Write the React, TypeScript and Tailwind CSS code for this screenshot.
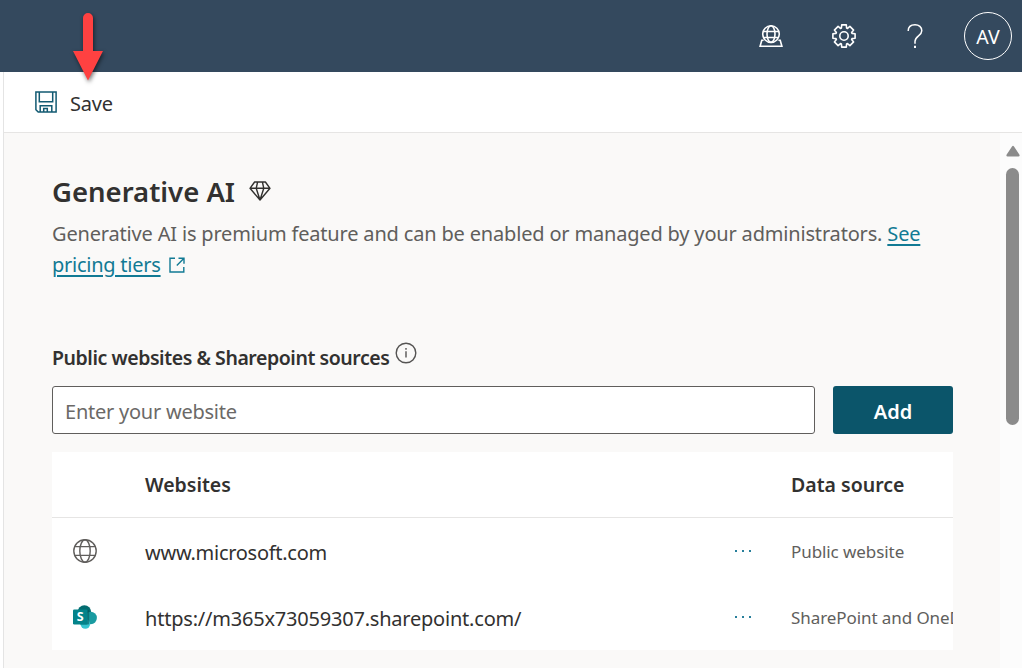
import type { ReactNode } from "react";

function Globe({ className }: { className?: string }) {
  return (
    <svg viewBox="0 0 24 24" className={className} fill="none" stroke="currentColor" strokeWidth="1.4">
      <circle cx="12" cy="12" r="11.2" />
      <ellipse cx="12" cy="12" rx="5.2" ry="11.2" />
      <path d="M1.8 7.6h20.4M1.8 16.4h20.4" />
    </svg>
  );
}

function PortalIcon() {
  return (
    <svg viewBox="0 0 24 24" className="h-6 w-6" fill="none" stroke="currentColor" strokeWidth="1.6">
      <circle cx="12" cy="10.1" r="8.3" />
      <ellipse cx="12" cy="10.1" rx="4" ry="8.3" />
      <path d="M4.2 7.5h15.6M4.2 13.5h15.6" />
      <path d="M4.6 16.2H2.8L1.1 22.2h21.8l-1.7-6h-1.8" />
    </svg>
  );
}

function GearIcon() {
  return (
    <svg viewBox="0 0 24 24" className="h-6 w-6" fill="none" stroke="currentColor" strokeWidth="1.6" strokeLinejoin="round">
      <path d="M9.7.9h4.6l.3 3.1.9.4 2.4-2 3.7 3.7-2 2.4.4.9 3.1.3v4.6l-3.1.3-.4.9 2 2.4-3.7 3.7-2.4-2-.9.4-.3 3.1H9.7l-.3-3.1-.9-.4-2.4 2-3.7-3.7 2-2.4-.4-.9-3.1-.3V9.7L4 9.4l.4-.9-2-2.4 3.7-3.7 2.4 2 .9-.4z" />
      <circle cx="12" cy="12" r="4.2" />
    </svg>
  );
}

function HelpIcon() {
  return (
    <svg viewBox="0 0 16 26" className="h-[26px] w-4" fill="none" stroke="currentColor" strokeWidth="1.5">
      <path d="M1.2 8C1.2 4 4 1.7 8 1.7s6.8 2.4 6.8 6c0 5-6.8 5.3-6.8 10.8v2.2" />
      <path d="M8 22.7v2.2" strokeWidth="2" />
    </svg>
  );
}

function SaveIcon() {
  return (
    <svg viewBox="0 0 22 22" className="h-[22px] w-[22px]" fill="none" stroke="#125a72" strokeWidth="1.5">
      <path d="M.9 .9h20.2v20.2H3.2L.9 18.8z" />
      <path d="M4.3 1v9.8h13.4V1M5.2 21v-6.2h11.6V21M8.7 21v-3.5h3.6V21" />
    </svg>
  );
}

function DiamondIcon() {
  return (
    <svg viewBox="0 0 22 20" className="h-5 w-[22px]" fill="none" stroke="#32312f" strokeWidth="1.4" strokeLinejoin="round">
      <path d="M5.6 1h10.8L21 7.3 11 19 1 7.3zM1 7.3h20M11 19 7.2 7.3 8.6 1M11 19l3.8-11.7L13.4 1" />
    </svg>
  );
}

function SharePointIcon() {
  return (
    <svg viewBox="0 0 24 24" className="h-6 w-6">
      <circle cx="11.4" cy="7" r="6.8" fill="#036c70" />
      <circle cx="17.7" cy="13" r="6.2" fill="#1a9ba1" />
      <circle cx="12.3" cy="19" r="4.8" fill="#37c6d0" />
      <path d="M7 5h8.2a1 1 0 0 1 1 1v12.5a1 1 0 0 1-1 1H7z" fill="#034f53" opacity=".55" />
      <rect x="0" y="4.4" width="14.5" height="15" rx="1.2" fill="#03838a" />
      <text x="7.3" y="16.3" fontFamily="Noto Sans, sans-serif" fontSize="12.5" fontWeight="700" fill="#fff" textAnchor="middle">S</text>
    </svg>
  );
}

function Dots() {
  return (
    <svg viewBox="0 0 18 4" className="h-1 w-[18px]" fill="#287f9b">
      <rect x="1" y="1" width="2" height="2" />
      <rect x="8" y="1" width="2" height="2" />
      <rect x="15" y="1" width="2" height="2" />
    </svg>
  );
}

function Row({ icon, site, source }: { icon: ReactNode; site: ReactNode; source: ReactNode }) {
  return (
    <div className="flex h-[66px] items-center">
      <div className="flex w-[93px] shrink-0 pl-[21px]">{icon}</div>
      <div className="w-[589px] shrink-0 pt-[3px] text-[20px]">{site}</div>
      <div className="w-[57px] shrink-0"><Dots /></div>
      <div className="shrink-0 pt-px text-[17px] tracking-[-0.08px] text-[#605e5c]">{source}</div>
    </div>
  );
}

export default function App() {
  return (
    <div className="flex h-[668px] w-[1022px] flex-col overflow-hidden bg-white font-['Noto_Sans','Open_Sans',sans-serif] whitespace-nowrap text-[#323130]">
      <header className="relative flex h-[72px] shrink-0 items-center justify-end bg-[#34495e] pr-[10px] text-white">
        <div className="mr-[49px]"><PortalIcon /></div>
        <div className="mr-[51px]"><GearIcon /></div>
        <div className="mr-[41px]"><HelpIcon /></div>
        <div className="flex h-12 w-12 items-center justify-center rounded-full border border-white pt-[2px] text-[19.5px]">
          <span>AV</span>
        </div>
        <svg viewBox="0 0 40 80" className="absolute top-[8px] left-[68px] z-10 h-20 w-10 drop-shadow-[1px_2px_2px_rgba(0,0,0,0.55)]">
          <path d="M15 10a5 5 0 0 1 10 0v33h10L20 72.5 5 43h10z" fill="#ff4141" />
        </svg>
      </header>
      <div className="ml-[3px] flex min-h-0 flex-1 flex-col border-l border-[#e4e4e4]">
        <div className="flex h-[61px] shrink-0 items-center border-b border-[#e6e5e4] bg-white pl-[31px]">
          <SaveIcon />
          <span className="ml-[13px] pt-[3px] text-[20px] tracking-[-0.2px]">Save</span>
        </div>
        <div className="flex min-h-0 flex-1 bg-[#faf9f8]">
          <main className="w-[996px] shrink-0 pl-12">
            <div className="mt-[38px] flex h-10 items-center">
              <h1 className="pt-px text-[27.5px] leading-10 font-semibold">Generative AI</h1>
              <div className="ml-[14px]"><DiamondIcon /></div>
            </div>
            <p className="mt-[7px] text-[20px] leading-[31px] tracking-[-0.175px] text-[#605e5c]">
              <span>Generative AI is premium feature and can be enabled or managed by your administrators.</span>{" "}
              <a className="text-[#117a94] underline decoration-2 underline-offset-[3px]">See</a>
              <br />
              <a className="tracking-[-0.25px] text-[#117a94] underline decoration-2 underline-offset-[3px]">pricing tiers</a>
              <svg viewBox="0 0 16 16" className="ml-2 inline-block h-4 w-4 align-[-1px]" fill="none" stroke="#117a94" strokeWidth="1.4">
                <path d="M6 1.2H1v13.8h13.8V10M9.5 1.2h5.5v5.5M15 1.2 7.8 8.4" />
              </svg>
            </p>
            <div className="mt-[57px] flex h-[36px] items-center">
              <h2 className="pt-[5px] text-[19.5px] font-semibold tracking-[-0.44px]">Public websites &amp; Sharepoint sources</h2>
              <svg viewBox="0 0 22 22" className="mb-[5px] ml-[6px] h-[22px] w-[22px]" fill="none" stroke="#555453" strokeWidth="1.4">
                <circle cx="11" cy="11" r="9.8" />
                <path d="M11 9.2v6.3M11 6v1.7" />
              </svg>
            </div>
            <div className="mt-[13px] flex">
              <div className="flex h-12 w-[763px] items-center rounded-[3px] border border-[#605e5c] bg-white pt-[4px] pl-3 text-[20px] tracking-[-0.24px] text-[#6b6967]">
                <span>Enter your website</span>
              </div>
              <button className="ml-[18px] h-12 w-[120px] rounded-[3px] bg-[#0b556a] pt-[4px] text-[20px] font-semibold text-white">Add</button>
            </div>
            <section className="mt-[18px] h-[198px] w-[901px] overflow-hidden bg-white">
              <div className="flex h-[66px] items-center border-b border-[#e6e5e4] pl-[93px] text-[19.5px] font-semibold">
                <div className="w-[646px] shrink-0"><span>Websites</span></div>
                <span>Data source</span>
              </div>
              <Row icon={<Globe className="h-6 w-6 text-[#605e5c]" />} site={<span className="tracking-[-0.28px]">www.microsoft.com</span>} source={<span>Public website</span>} />
              <Row icon={<SharePointIcon />} site={<span className="tracking-[-0.21px]">https://m365x73059307.sharepoint.com/</span>} source={<span>SharePoint and OneDrive</span>} />
            </section>
          </main>
          <aside className="flex flex-1 flex-col items-center bg-[#fcfcfc] pt-3 pl-[3px]">
            <svg viewBox="0 0 14 12" className="h-3 w-[14px]" fill="#8b8b8b">
              <path d="M6 1.5q1-1.6 2 0l5.3 8q1 2-1 2H1.7q-2 0-1-2z" />
            </svg>
            <div className="mt-[11px] mr-px h-[257px] w-[13px] rounded-full bg-[#8b8b8b]" />
          </aside>
        </div>
      </div>
    </div>
  );
}
